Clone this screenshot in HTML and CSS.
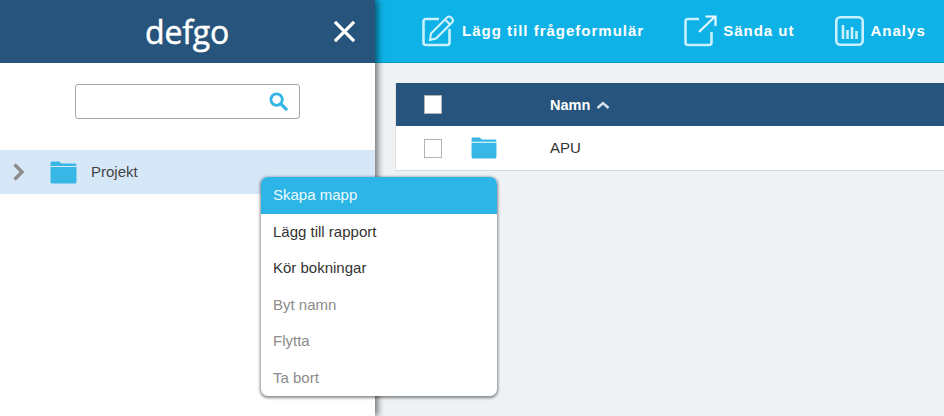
FILE: index.html
```html
<!DOCTYPE html>
<html>
    <head>
        <meta charset="utf-8"/>
        <link rel="stylesheet" href="styles.css">
    </head>
    <body>
        <aside class="sidebar">
            <div class="brand">
                <span class="logo">defgo</span>
                <svg class="close-icon" width="23" height="23" viewBox="0 0 24 24">
                    <path d="M2 2 L22 22 M22 2 L2 22" fill="none" stroke="#fff" stroke-width="3.400"/>
                </svg>
            </div>
            <div class="search-row">
                <div class="search-box">
                    <svg width="19" height="19" viewBox="0 0 20 20">
                        <circle cx="8" cy="8" r="6" fill="none" stroke="#35b5e5" stroke-width="3"/>
                        <path d="M12.500 12.500 L18 18" fill="none" stroke="#35b5e5" stroke-width="3.400" stroke-linecap="round"/>
                    </svg>
                </div>
            </div>
            <div class="tree-row">
                <svg class="chevron" width="14" height="20" viewBox="0 0 14 20">
                    <path d="M2.500 2.500 L10 10 L2.500 17.500" fill="none" stroke="#8c8c8c" stroke-width="3.400"/>
                </svg>
                <svg class="folder" width="27" height="23" viewBox="0 0 27 23">
                    <path d="M0.500 2 Q0.500 0.500 2 0.500 H9 L11.500 2.500 H25 Q26.500 2.500 26.500 4 V5 H0.500 Z M0.500 6 H26.500 V21 Q26.500 22.500 25 22.500 H2 Q0.500 22.500 0.500 21 Z" fill="#38b6e6"/>
                </svg>
                <span>Projekt</span>
            </div>
        </aside>

        <main class="content">
            <nav class="toolbar">
                <div class="tool tool-add">
                    <svg width="34" height="32" viewBox="0 0 34 32">
                        <path d="M17 4 H4 Q1.500 4 1.500 6.500 V27.500 Q1.500 30 4 30 H25 Q27.500 30 27.500 27.500 V14" fill="none" stroke="#c9f0fc" stroke-width="2.600"/>
                        <path d="M9 18.500 L25.500 2 Q27 1 28.500 2 L30.500 4 Q31.500 5.500 30.500 7 L14 23.500 L8 25 Z M23 4.500 L28 9.500" fill="none" stroke="#d6f4fd" stroke-width="2"/>
                    </svg>
                    <span>Lägg till frågeformulär</span>
                </div>
                <div class="tool tool-send">
                    <svg width="34" height="32" viewBox="0 0 34 32">
                        <path d="M15 4 H4 Q1.500 4 1.500 6.500 V27.500 Q1.500 30 4 30 H25 Q27.500 30 27.500 27.500 V17" fill="none" stroke="#c9f0fc" stroke-width="2.600"/>
                        <path d="M15 17 L31 1.500 M21.500 1.500 H31.500 V11" fill="none" stroke="#e6f9fe" stroke-width="2.200"/>
                    </svg>
                    <span>Sända ut</span>
                </div>
                <div class="tool tool-analysis">
                    <svg width="29" height="30" viewBox="0 0 29 30">
                        <rect x="1.300" y="1.300" width="26.400" height="27.400" rx="4" fill="none" stroke="#c9f0fc" stroke-width="2.600"/>
                        <path d="M8 9 V23 M12.500 14 V23 M17 11 V23 M21.500 15 V23" fill="none" stroke="#c9f0fc" stroke-width="2.600"/>
                    </svg>
                    <span>Analys</span>
                </div>
            </nav>
            <div class="table-wrap">
                <div class="table-head">
                    <div class="col-check"><span class="checkbox checkbox-head"></span></div>
                    <div class="col-icon"></div>
                    <div class="col-name">Namn
                        <svg width="14" height="8" viewBox="0 0 14 8">
                            <path d="M1.500 7 L7 2 L12.500 7" fill="none" stroke="#d8e2ea" stroke-width="2.400"/>
                        </svg>
                    </div>
                </div>
                <div class="table-row">
                    <div class="col-check"><span class="checkbox"></span></div>
                    <div class="col-icon">
                        <svg class="folder" width="26" height="22" viewBox="0 0 27 23">
                            <path d="M0.500 2 Q0.500 0.500 2 0.500 H9 L11.500 2.500 H25 Q26.500 2.500 26.500 4 V5 H0.500 Z M0.500 6 H26.500 V21 Q26.500 22.500 25 22.500 H2 Q0.500 22.500 0.500 21 Z" fill="#38b6e6"/>
                        </svg>
                    </div>
                    <div class="col-name">APU</div>
                </div>
            </div>
        </main>

        <ul class="context-menu">
            <li class="active">Skapa mapp</li>
            <li>Lägg till rapport</li>
            <li>Kör bokningar</li>
            <li class="disabled">Byt namn</li>
            <li class="disabled">Flytta</li>
            <li class="disabled">Ta bort</li>
        </ul>
    </body>
</html>
```

FILE: styles.css
```css
html, body {
    height: 100%;
}

body {
    margin: 0;
    padding: 0;
    display: flex;
    overflow: hidden;
    background: #eef2f5;
    font-family: "Liberation Sans", Arial, sans-serif;
    font-size: 15px;
    color: #333;
}

/* left column */
.sidebar {
    width: 375px;
    flex-shrink: 0;
    background: #fff;
    box-shadow: 3px 0 6px rgba(0, 0, 0, 0.5);
    position: relative;
    z-index: 1;
}

.brand {
    height: 63px;
    background: #26547c;
    display: flex;
    align-items: center;
    padding-left: 145px;
    padding-right: 19px;
    box-sizing: border-box;
}

.logo {
    font-family: "Open Sans", sans-serif;
    font-size: 32px;
    line-height: 60px;
    color: #fff;
    letter-spacing: -0.2px;
    -webkit-text-stroke: 0.5px #fff;
}

.close-icon {
    margin-left: auto;
}

.search-row {
    padding: 21px 0 0 75px;
}

.search-box {
    width: 225px;
    height: 35px;
    box-sizing: border-box;
    border: 1px solid #a6a6a6;
    border-radius: 3px;
    display: flex;
    align-items: center;
    justify-content: flex-end;
    padding-right: 11px;
}

.tree-row {
    margin-top: 31px;
    height: 44px;
    background: #d6e8f8;
    display: flex;
    align-items: center;
    padding-left: 12px;
    color: #444;
}

.chevron {
    margin-right: 24px;
}

.tree-row span {
    margin-left: 14px;
    margin-bottom: 2px;
}

/* right column */
.content {
    flex: 1;
    min-width: 0;
}

.toolbar {
    height: 62px;
    background: #0eb2e6;
    border-bottom: 1px solid #0a9cc9;
    display: flex;
    align-items: center;
    color: #fff;
    font-weight: bold;
    font-size: 15px;
    letter-spacing: 1px;
}

.tool {
    display: flex;
    align-items: center;
    gap: 6px;
}

.tool span {
    margin-bottom: 2px;
}

.tool-add {
    margin-left: 47px;
}

.tool-send {
    margin-left: 40px;
    gap: 5px;
}

.tool-analysis {
    margin-left: 40px;
    gap: 7px;
}

.table-wrap {
    margin: 20px 0 0 20px;
    background: #fff;
    border-bottom: 1px solid #d9d9d9;
    border-left: 1px solid #e2e2e2;
}

.table-head, .table-row {
    display: flex;
    align-items: center;
}

.table-head {
    height: 43px;
    background: #26547c;
    color: #fff;
    font-weight: bold;
    font-size: 14.500px;
}

.table-row {
    height: 44px;
}

.table-row .col-name {
    margin-bottom: 2px;
}

.col-check {
    width: 46px;
    padding-left: 28px;
    flex-shrink: 0;
    display: flex;
}

.col-icon {
    width: 80px;
    padding-left: 1px;
    box-sizing: border-box;
    flex-shrink: 0;
    display: flex;
}

.col-name {
    display: flex;
    align-items: center;
    gap: 6px;
}

.checkbox {
    width: 16px;
    height: 17px;
    border: 1px solid #b3b3b3;
    background: #fff;
}

/* popup */
.context-menu {
    position: absolute;
    left: 261px;
    top: 177px;
    width: 236px;
    margin: 0;
    padding: 0;
    list-style: none;
    background: #fff;
    border-radius: 7px;
    overflow: hidden;
    box-shadow: 0 1px 3px 1px rgba(0, 0, 0, 0.45);
    z-index: 2;
}

.context-menu li {
    height: 36.500px;
    line-height: 36.500px;
    padding-left: 12px;
}

.context-menu .active {
    background: #2cb5e6;
    color: #eefaff;
}

.context-menu .disabled {
    color: #8c8c8c;
}
```
